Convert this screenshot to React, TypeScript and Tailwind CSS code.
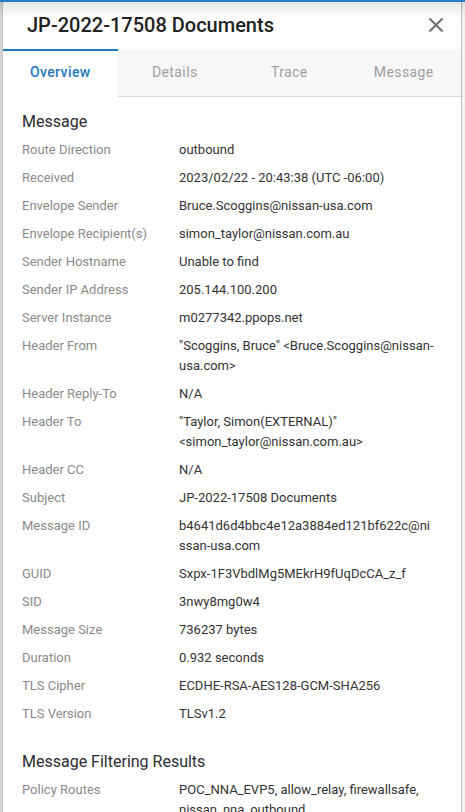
import React from "react";

const rows: [string, string][] = [
  ["Route Direction", "outbound"],
  ["Received", "2023/02/22 - 20:43:38 (UTC -06:00)"],
  ["Envelope Sender", "Bruce.Scoggins@nissan-usa.com"],
  ["Envelope Recipient(s)", "simon_taylor@nissan.com.au"],
  ["Sender Hostname", "Unable to find"],
  ["Sender IP Address", "205.144.100.200"],
  ["Server Instance", "m0277342.ppops.net"],
  ["Header From", "\"Scoggins, Bruce\" <Bruce.Scoggins@nissan-usa.com>"],
  ["Header Reply-To", "N/A"],
  ["Header To", "\"Taylor, Simon(EXTERNAL)\" <simon_taylor@nissan.com.au>"],
  ["Header CC", "N/A"],
  ["Subject", "JP-2022-17508 Documents"],
  ["Message ID", "b4641d6d4bbc4e12a3884ed121bf622c@nissan-usa.com"],
  ["GUID", "Sxpx-1F3VbdlMg5MEkrH9fUqDcCA_z_f"],
  ["SID", "3nwy8mg0w4"],
  ["Message Size", "736237 bytes"],
  ["Duration", "0.932 seconds"],
  ["TLS Cipher", "ECDHE-RSA-AES128-GCM-SHA256"],
  ["TLS Version", "TLSv1.2"],
];

function Row({ label, value, breakAll }: { label: string; value: string; breakAll?: boolean }) {
  return (
    <div className="flex py-[4px] text-[13px] leading-[20px]">
      <div className="w-[157px] shrink-0 text-[#8a8a8a]">{label}</div>
      <div className={"w-[257px] text-[#333333] " + (breakAll ? "break-all" : "break-words")}>{value}</div>
    </div>
  );
}

export default function App() {
  const tabs = ["Overview", "Details", "Trace", "Message"];
  return (
    <div
      className="relative flex h-[812px] w-[465px] overflow-hidden bg-[#f4f4f4]"
      style={{ fontFamily: "Roboto, 'Liberation Sans', sans-serif" }}
    >
      <div className="w-[3px] shrink-0 bg-[#d6d6d6] border-r border-[#c4c4c4]" />
      <div className="flex w-[459px] shrink-0 flex-col border-r border-[#bdbdbd] bg-white">
        <div className="flex h-[49px] shrink-0 items-center justify-between pl-[24px] pr-[17px]">
          <div className="text-[20px] font-medium leading-[24px] text-[#222222] pt-[1px]">
            JP-2022-17508 Documents
          </div>
          <svg width="16" height="16" viewBox="0 0 16 16" className="mt-[1px]">
            <path d="M1.5 1.5 L14.5 14.5 M14.5 1.5 L1.5 14.5" stroke="#6e6e6e" strokeWidth="2" fill="none" />
          </svg>
        </div>
        <div className="flex h-[48px] shrink-0">
          {tabs.map((t, i) =>
            i === 0 ? (
              <div
                key={t}
                className="flex flex-1 items-center justify-center border-t-2 border-[#1f78c1] bg-white pb-[4px] text-[14px] font-medium tracking-[0.4px] text-[#2479bd]"
              >
                {t}
              </div>
            ) : (
              <div
                key={t}
                className="flex flex-1 items-center justify-center border-b border-[#d9d9d9] bg-[#f7f7f7] text-[14px] tracking-[0.4px] text-[#a0a0a0]"
              >
                {t}
              </div>
            )
          )}
        </div>
        <div className="pl-[19px] pr-[20px] pt-[13px] pb-[12px]">
          <div className="mb-[2px] text-[16px] leading-[24px] text-[#2b2b33]">Message</div>
          {rows.map(([l, v]) => (
            <Row key={l} label={l} value={v} breakAll={l === "Message ID"} />
          ))}
        </div>
        <div className="h-px bg-[#dcdcdc]" />
        <div className="pl-[19px] pr-[20px] pt-[10px]">
          <div className="mb-[2px] text-[16px] leading-[24px] text-[#2b2b33]">Message Filtering Results</div>
          <Row label="Policy Routes" value="POC_NNA_EVP5, allow_relay, firewallsafe, nissan_nna_outbound" />
        </div>
      </div>
      <div className="pointer-events-none absolute left-0 right-0 top-0 h-[2px] bg-[#2a7bc4]" />
      <div className="pointer-events-none absolute left-0 right-0 top-[2px] h-[16px] bg-gradient-to-b from-[rgba(0,0,0,0.10)] to-transparent" />
    </div>
  );
}
